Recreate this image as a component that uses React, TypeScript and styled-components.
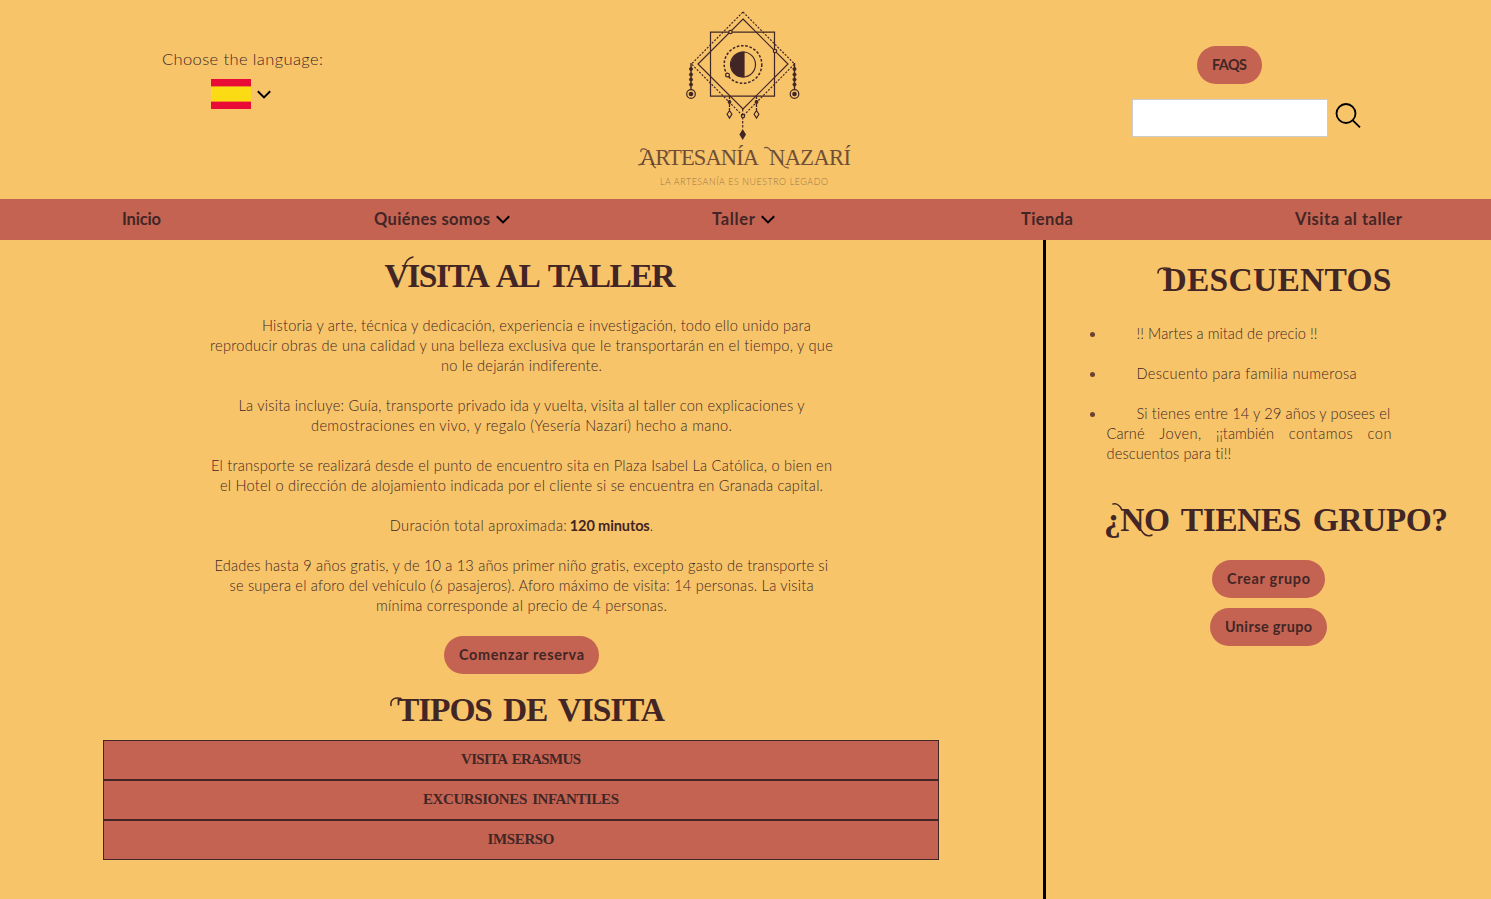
import React, { useLayoutEffect, useRef, useState } from 'react';
import styled, { createGlobalStyle } from 'styled-components';

const sand = '#f7c469';
const clay = '#c46351';
const ink = '#422626';

const GlobalStyle = createGlobalStyle`
  * { box-sizing: border-box; }
  body {
    margin: 0;
    background: ${sand};
    color: ${ink};
    font-family: Lato, 'Open Sans', sans-serif;
    overflow: hidden;
  }
`;

const FitBox = styled.span<{ $w: number }>`
  display: inline-block;
  width: ${p => p.$w}px;
  white-space: pre;
  text-align: left;
`;

/* Spreads the letters of a line so that it is exactly w pixels wide. */
function Fit({ w, children }: { w: number; children: string }) {
  const ref = useRef<HTMLSpanElement>(null);
  const [gap, setGap] = useState(0);
  useLayoutEffect(() => {
    if (ref.current && children.length > 1) {
      const natural = ref.current.getBoundingClientRect().width;
      setGap((w - natural) / (children.length - 1));
    }
  }, [w, children]);
  return (
    <FitBox $w={w}>
      <span ref={ref} style={{ letterSpacing: gap }}>{children}</span>
    </FitBox>
  );
}

const Page = styled.div`
  width: 1491px;
  height: 899px;
  display: flex;
  flex-direction: column;
`;

const Header = styled.header`
  height: 199px;
  display: grid;
  grid-template-columns: 486px 516px 489px;
`;

const Language = styled.div`
  padding: 49px 1px 0 0;
  display: flex;
  flex-direction: column;
  align-items: center;
  font-size: 16.5px;
  line-height: 20px;
  font-weight: 300;
`;

const FlagRow = styled.div`
  display: flex;
  align-items: center;
  gap: 6px;
  margin-top: 10px;
  margin-right: 3px;
`;

const Flag = styled.div`
  width: 40px;
  height: 30px;
  background: linear-gradient(#e90a35 0 7px, #ed8a24 7px 8px, #fbdc14 8px 22px, #ed8a24 22px 23px, #e90a35 23px);
`;

const LogoBox = styled.div`
  display: flex;
  justify-content: center;
`;

const Tools = styled.div`
  padding: 46px 0 0 130px;
`;

const Pill = styled.button<{ $w: number }>`
  display: block;
  width: ${p => p.$w}px;
  height: 38px;
  padding: 0;
  border: 0;
  border-radius: 20px;
  background: ${clay};
  color: ${ink};
  font: 700 14.400px/20px Lato, sans-serif;
`;

const FaqSlot = styled.div`
  padding-left: 65px;
`;

const SearchRow = styled.div`
  display: flex;
  gap: 7px;
  margin-top: 15px;
`;

const SearchInput = styled.input`
  width: 196px;
  height: 38px;
  border: 1px solid #ccc;
  background: #fff;
`;

const Nav = styled.nav`
  height: 41px;
  flex: none;
  background: ${clay};
  display: grid;
  grid-template-columns: 252px 338px 309px 274px 1fr;
  padding: 0 0 1px 122px;
  align-items: center;
  font-size: 16.500px;
  line-height: 20px;
  font-weight: 700;
`;

const NavItem = styled.div`
  display: flex;
  align-items: center;
  gap: 6px;
`;

const Main = styled.main`
  flex: 1;
  display: grid;
  grid-template-columns: 1043px 448px;
`;

const Visit = styled.section`
  display: flex;
  flex-direction: column;
  align-items: center;
`;

const Aside = styled.aside`
  border-left: 3px solid #000;
  display: flex;
  flex-direction: column;
  align-items: center;
`;

const Title = styled.h2<{ $top: number; $left?: number }>`
  position: relative;
  margin: ${p => p.$top}px 0 0 ${p => p.$left ?? 0}px;
  height: 40px;
  font: 700 33.500px/40px 'Liberation Serif', serif;
  word-spacing: 4px;
  text-transform: uppercase;
`;

const Flourish = styled.svg`
  position: absolute;
  left: -10px;
  top: -10px;
  overflow: visible;
  fill: none;
  stroke: ${ink};
  stroke-width: 1.5;
  stroke-linecap: round;
`;

const Copy = styled.div`
  margin-top: 20px;
  display: flex;
  flex-direction: column;
  gap: 20px;
  font-size: 14.600px;
  line-height: 20px;
  font-weight: 300;
`;

const Paragraph = styled.p`
  margin: 0;
`;

const Line = styled.span<{ $indent?: boolean }>`
  display: flex;
  justify-content: center;
  height: 20px;
  padding-left: ${p => (p.$indent ? 30 : 0)}px;
`;

const Strong = styled.strong`
  font-weight: 700;
  margin-left: 3px;
`;

const Kinds = styled.div`
  width: 836px;
  margin: 10px 1px 0 0;
`;

const Kind = styled.div`
  height: 40px;
  border: 1px solid ${ink};
  background: ${clay};
  text-align: center;
  font: 700 15px/36px 'Liberation Serif', serif;
  word-spacing: 2px;
  text-transform: uppercase;
`;

const Discounts = styled.ul`
  width: 285px;
  margin: 24px 39px 0 0;
  padding: 0;
  list-style: none;
  display: flex;
  flex-direction: column;
  gap: 20px;
  font-size: 14.600px;
  line-height: 20px;
  font-weight: 300;
`;

const Discount = styled.li`
  position: relative;
  &::before {
    content: '';
    position: absolute;
    left: -17px;
    top: 8px;
    width: 5px;
    height: 5px;
    border-radius: 50%;
    background: #6d4034;
  }
`;

const ItemLine = styled.span<{ $indent?: boolean }>`
  display: flex;
  justify-content: space-between;
  height: 20px;
  padding-left: ${p => (p.$indent ? 30 : 0)}px;
`;

const GroupButtons = styled.div`
  display: flex;
  flex-direction: column;
  align-items: center;
  gap: 10px;
  margin-top: 20px;
`;

const Chevron = () => (
  <svg width="14" height="9" viewBox="0 0 14 9" fill="none" stroke="#000" strokeWidth="2">
    <path d="M.8 1.2 7 7.4l6.200-6.200" />
  </svg>
);

const Bead = ({ x }: { x: number }) => (
  <g>
    <path d={`M${x} 63v27`} strokeWidth="1.400" />
    {[69, 74.5, 79.5, 84.500].map(y => (
      <circle key={y} cx={x} cy={y} r="1.600" fill={ink} strokeWidth=".8" />
    ))}
    <circle cx={x} cy="94" r="4.300" />
    <circle cx={x} cy="94" r="2.300" fill={ink} stroke="none" />
  </g>
);

const Pendant = ({ x }: { x: number }) => (
  <g>
    <path d={`M${x} 96v14`} strokeDasharray="3 1" strokeWidth="1.300" />
    <circle cx={x} cy="102" r="1.300" />
    <path d={`M${x} 110.500l2.400 3.800-2.400 3.800-2.400-3.800z`} />
  </g>
);

const Logo = () => (
  <svg width="240" height="195" viewBox="624 0 240 195" fill="none" stroke={ink} strokeWidth="1.200">
    <path d="M743 12l51.500 52L743 116l-51.500-52z" strokeDasharray="2 1.500" />
    <path d="M743 19l45 45-45 45-45-45z" />
    <path d="M710.500 32.200h64v64h-64z" />
    <circle cx="743" cy="64.500" r="18.800" strokeWidth="1.500" strokeDasharray="2.600 1.700" />
    <circle cx="743" cy="64.500" r="12.500" />
    <path d="M744 52a12.500 12.500 0 0 0 0 25z" fill={ink} />
    <g fill={sand}>
      <circle cx="730.500" cy="32" r="1.700" />
      <circle cx="775" cy="51" r="1.700" />
      <circle cx="727.500" cy="75" r="1.900" />
      <circle cx="743" cy="116" r="1.700" />
    </g>
    <Bead x={691} />
    <Bead x={794.5} />
    <Pendant x={729.5} />
    <Pendant x={756.5} />
    <path d="M742.700 109v20" strokeDasharray="2.500 1.500" />
    <path d="M742.700 129l3.300 5.500-3.300 5.500-3.300-5.500z" fill={ink} stroke="none" />
    <g fill={ink} stroke="none" fontFamily="'Liberation Serif', serif">
      <text x="640" y="165" fontSize="22.500" opacity=".75" textLength="119" lengthAdjust="spacing">ARTESANÍA</text>
      <text x="769" y="165" fontSize="22.500" opacity=".75" textLength="82" lengthAdjust="spacing">NAZARÍ</text>
      <text x="660" y="184.500" fontSize="8.800" opacity=".5" fontFamily="Lato, sans-serif" fontWeight="300" textLength="168">LA ARTESANÍA ES NUESTRO LEGADO</text>
    </g>
    <g opacity=".7">
      <path d="M647 150c-4-2-7-1-6 2M644 160c-1 3-3 5-6 5M652 163c1 3 2 4 4 5" />
      <path d="M771 151c-2-3-5-4-7-3M782 164c2 3 4 4 7 4" />
    </g>
  </svg>
);

export default function App() {
  return (
    <Page>
      <GlobalStyle />
      <Header>
        <Language>
          <Fit w={161}>Choose the language:</Fit>
          <FlagRow>
            <Flag />
            <Chevron />
          </FlagRow>
        </Language>
        <LogoBox><Logo /></LogoBox>
        <Tools>
          <FaqSlot><Pill $w={65}><Fit w={35}>FAQS</Fit></Pill></FaqSlot>
          <SearchRow>
            <SearchInput aria-label="Buscar" />
            <svg width="28" height="32" viewBox="0 0 28 32" fill="none" stroke="#000" strokeWidth="1.800">
              <circle cx="11" cy="14.500" r="9.500" />
              <path d="M17.800 21.300l7.200 7" />
            </svg>
          </SearchRow>
        </Tools>
      </Header>
      <Nav>
        <NavItem><Fit w={39}>Inicio</Fit></NavItem>
        <NavItem><Fit w={116}>Quiénes somos</Fit><Chevron /></NavItem>
        <NavItem><Fit w={43}>Taller</Fit><Chevron /></NavItem>
        <NavItem><Fit w={52}>Tienda</Fit></NavItem>
        <NavItem><Fit w={107}>Visita al taller</Fit></NavItem>
      </Nav>
      <Main>
        <Visit>
          <Title $top={16} $left={17}>
            <Fit w={291}>Visita al taller</Fit>
            <Flourish width="60" height="60"><path d="M29 22c1-5 4-10 9-11" /></Flourish>
          </Title>
          <Copy>
            <Paragraph>
              <Line $indent><Fit w={549}>Historia y arte, técnica y dedicación, experiencia e investigación, todo ello unido para</Fit></Line>
              <Line><Fit w={623}>reproducir obras de una calidad y una belleza exclusiva que le transportarán en el tiempo, y que</Fit></Line>
              <Line><Fit w={161}>no le dejarán indiferente.</Fit></Line>
            </Paragraph>
            <Paragraph>
              <Line><Fit w={566}>La visita incluye: Guía, transporte privado ida y vuelta, visita al taller con explicaciones y</Fit></Line>
              <Line><Fit w={421}>demostraciones en vivo, y regalo (Yesería Nazarí) hecho a mano.</Fit></Line>
            </Paragraph>
            <Paragraph>
              <Line><Fit w={621}>El transporte se realizará desde el punto de encuentro sita en Plaza Isabel La Católica, o bien en</Fit></Line>
              <Line><Fit w={603}>el Hotel o dirección de alojamiento indicada por el cliente si se encuentra en Granada capital.</Fit></Line>
            </Paragraph>
            <Paragraph>
              <Line>
                <Fit w={177}>Duración total aproximada:</Fit>
                <Strong><Fit w={80}>120 minutos</Fit></Strong>.
              </Line>
            </Paragraph>
            <Paragraph>
              <Line><Fit w={614}>Edades hasta 9 años gratis, y de 10 a 13 años primer niño gratis, excepto gasto de transporte si</Fit></Line>
              <Line><Fit w={584}>se supera el aforo del vehículo (6 pasajeros). Aforo máximo de visita: 14 personas. La visita</Fit></Line>
              <Line><Fit w={291}>mínima corresponde al precio de 4 personas.</Fit></Line>
            </Paragraph>
          </Copy>
          <GroupButtons><Pill $w={155}><Fit w={125}>Comenzar reserva</Fit></Pill></GroupButtons>
          <Title $top={16} $left={19}>
            <Fit w={268}>Tipos de visita</Fit>
            <Flourish width="60" height="60"><path d="M14 18.500c-4-1-11-1-10 7" /></Flourish>
          </Title>
          <Kinds>
            <Kind><Fit w={120}>Visita Erasmus</Fit></Kind>
            <Kind><Fit w={196}>Excursiones infantiles</Fit></Kind>
            <Kind><Fit w={67}>Imserso</Fit></Kind>
          </Kinds>
        </Visit>
        <Aside>
          <Title $top={20} $left={17}>
            <Fit w={229}>Descuentos</Fit>
            <Flourish width="60" height="60"><path d="M5 23c0-5 4-5.500 12-4.500" /></Flourish>
          </Title>
          <Discounts>
            <Discount>
              <ItemLine $indent><Fit w={181}>!! Martes a mitad de precio !!</Fit></ItemLine>
            </Discount>
            <Discount>
              <ItemLine $indent><Fit w={220}>Descuento para familia numerosa</Fit></ItemLine>
            </Discount>
            <Discount>
              <ItemLine $indent><Fit w={254}>Si tienes entre 14 y 29 años y posees el</Fit></ItemLine>
              <ItemLine>
                <Fit w={38}>Carné</Fit>
                <Fit w={42}>Joven,</Fit>
                <Fit w={58}>¡¡también</Fit>
                <Fit w={64}>contamos</Fit>
                <Fit w={24}>con</Fit>
              </ItemLine>
              <ItemLine><Fit w={125}>descuentos para ti!!</Fit></ItemLine>
            </Discount>
          </Discounts>
          <Title $top={36} $left={15}>
            <Fit w={344}>¿No tienes grupo?</Fit>
            <Flourish width="60" height="80"><path d="M28 20c-2-4-5-7-9-6M47 40c3 5 7 7 11 5" /></Flourish>
          </Title>
          <GroupButtons>
            <Pill $w={113}><Fit w={83}>Crear grupo</Fit></Pill>
            <Pill $w={117}><Fit w={87}>Unirse grupo</Fit></Pill>
          </GroupButtons>
        </Aside>
      </Main>
    </Page>
  );
}
